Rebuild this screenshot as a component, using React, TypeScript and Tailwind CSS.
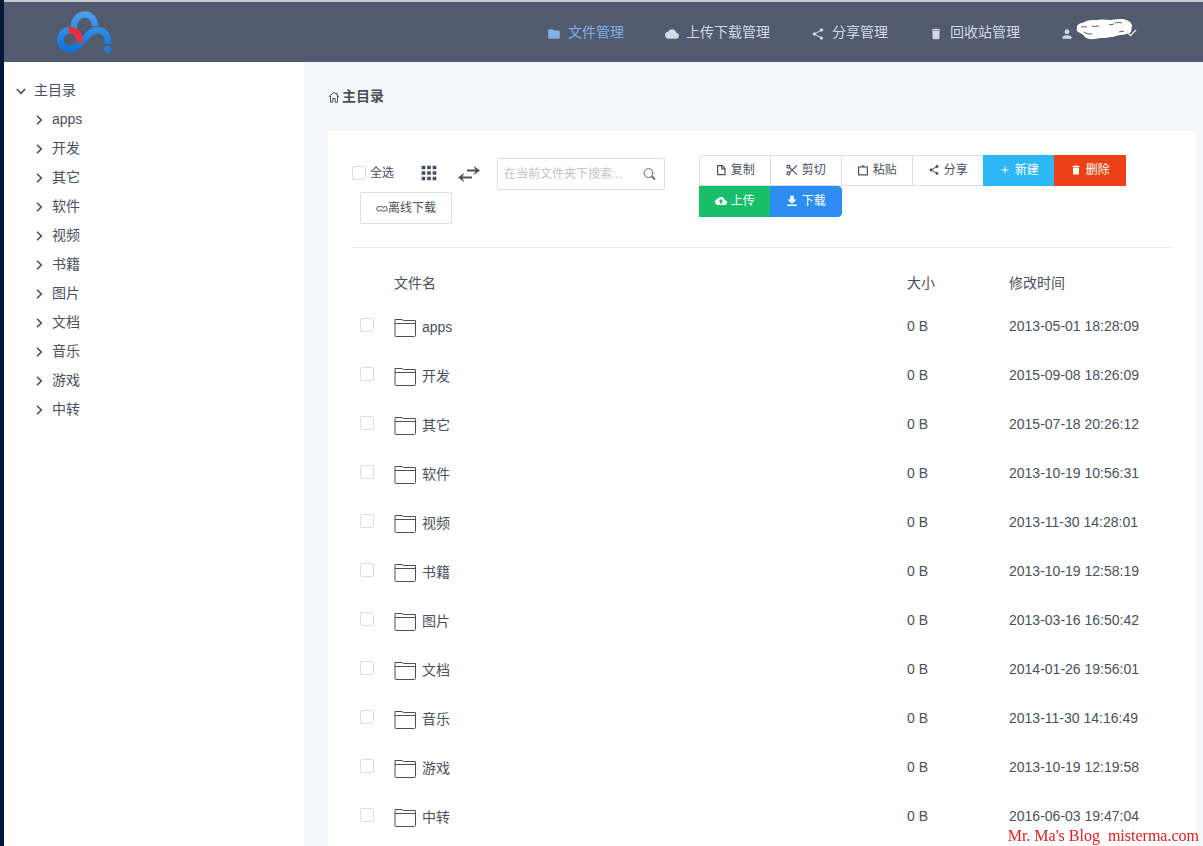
import { useState } from 'react';
import type { ReactNode } from 'react';
import clsx from 'clsx';
import {
  MdAdd,
  MdApps,
  MdCloud,
  MdCloudUpload,
  MdDelete,
  MdFolder,
  MdPerson,
  MdShare,
} from 'react-icons/md';

interface FileItem {
  name: string;
  size: string;
  mtime: string;
}

const FILES: FileItem[] = [
  { name: 'apps', size: '0 B', mtime: '2013-05-01 18:28:09' },
  { name: '开发', size: '0 B', mtime: '2015-09-08 18:26:09' },
  { name: '其它', size: '0 B', mtime: '2015-07-18 20:26:12' },
  { name: '软件', size: '0 B', mtime: '2013-10-19 10:56:31' },
  { name: '视频', size: '0 B', mtime: '2013-11-30 14:28:01' },
  { name: '书籍', size: '0 B', mtime: '2013-10-19 12:58:19' },
  { name: '图片', size: '0 B', mtime: '2013-03-16 16:50:42' },
  { name: '文档', size: '0 B', mtime: '2014-01-26 19:56:01' },
  { name: '音乐', size: '0 B', mtime: '2013-11-30 14:16:49' },
  { name: '游戏', size: '0 B', mtime: '2013-10-19 12:19:58' },
  { name: '中转', size: '0 B', mtime: '2016-06-03 19:47:04' },
];

const NAV = [
  { label: '文件管理', icon: <MdFolder className="size-3.5" /> },
  { label: '上传下载管理', icon: <MdCloud className="size-3.5" /> },
  { label: '分享管理', icon: <MdShare className="size-3.5" /> },
  { label: '回收站管理', icon: <MdDelete className="size-3.5" /> },
];

/** Cloud logo made of three linked strokes */
function Logo() {
  return (
    <svg viewBox="0 0 54 42" className="w-[54px] h-[42px]" fill="none" strokeWidth="6.600">
      <defs>
        <linearGradient id="logo-blue" x1="0" y1="0" x2="0" y2="42" gradientUnits="userSpaceOnUse">
          <stop offset="0" stopColor="#4fa2ea" />
          <stop offset="1" stopColor="#0b6fd8" />
        </linearGradient>
      </defs>
      <path d="M17 17c0-8.200 4.300-13.500 10.500-13.500S37.500 8 38.200 15" stroke="url(#logo-blue)" />
      <circle cx="12.800" cy="28.600" r="9.500" stroke="url(#logo-blue)" />
      <path
        d="M17 37.200c6-2.700 10-9.200 14-13.200 3-3.200 6-4.900 9.700-4.900 5.800 0 10 4.500 10 10.400v3.500"
        stroke="url(#logo-blue)"
      />
      <path d="M11.500 19.100c6-.6 10.800 3.700 10.800 9.500 0 1.200-.2 2-.6 3" stroke="#e8303c" />
      <circle cx="50.500" cy="37.800" r="4.500" fill="#515a6e" />
      <circle cx="50.500" cy="38.200" r="3.400" fill="#1a7fe0" />
    </svg>
  );
}

function Chevron({ down = false }: { down?: boolean }) {
  return (
    <svg
      viewBox="0 0 10 10"
      className={clsx('mt-0.5 size-2.5 shrink-0', down && 'rotate-90')}
      fill="none"
      stroke="currentColor"
      strokeWidth="1.600"
    >
      <path d="M3 .8 7.300 5 3 9.200" />
    </svg>
  );
}

function HomeIcon() {
  return (
    <svg viewBox="0 0 12 12" className="mt-0.5 size-3" fill="none" stroke="currentColor">
      <path d="M.8 6 6 1.200 11.200 6M2.500 5v6.200h2.300V7.500h2.400v3.700h2.300V5M9 3.500v-2" />
    </svg>
  );
}

function SwapIcon() {
  return (
    <svg viewBox="0 0 22 18" className="w-[22px] h-[18px]" fill="currentColor">
      <path d="M9 4.500h8.500L15.500.8 22 5.500l-6.500 4.700 2-3.700H9zM14 11.500H4.500l2-3.700L0 12.500l6.500 4.700-2-3.700H14z" />
    </svg>
  );
}

function SearchIcon() {
  return (
    <svg viewBox="0 0 14 14" className="size-3.5" fill="none" stroke="currentColor">
      <circle cx="6" cy="6" r="4.800" />
      <path d="m9.500 9.500 3.500 3.500" strokeWidth="1.800" />
    </svg>
  );
}

function LinkIcon() {
  return (
    <svg viewBox="0 0 12 12" className="size-3" fill="none" stroke="currentColor">
      <path d="M4.300 9H3a2.200 2.200 0 0 1 0-4.400h2.500c1.300 0 2 .8 2 1.900M7.700 4.600H9A2.200 2.200 0 0 1 9 9H6.500c-1.300 0-2-.8-2-1.900" />
    </svg>
  );
}

function CopyIcon() {
  return (
    <svg viewBox="0 0 12 12" className="size-3" fill="none" stroke="currentColor" strokeWidth="1.200">
      <path d="M4.500 1.600h2.700L10 4.400v6.200H2.600V3.500M6.800 1.600v3.200H10" />
      <path d="M2.600 4V1.600h2.400" />
    </svg>
  );
}

function CutIcon() {
  return (
    <svg viewBox="0 0 12 12" className="size-3" fill="none" stroke="currentColor" strokeWidth="1.200">
      <circle cx="2.400" cy="2.600" r="1.500" />
      <circle cx="2.400" cy="9.400" r="1.500" />
      <path d="m3.600 3.600 7.400 7M3.600 8.400l7.400-7" />
    </svg>
  );
}

function PasteIcon() {
  return (
    <svg viewBox="0 0 12 12" className="size-3" fill="none" stroke="currentColor" strokeWidth="1.200">
      <path d="M3.800 3H1.600v7.900h8.800V3H8.200" />
      <path d="M3.500 3.600h5V2.200H7.200L6 .8 4.800 2.200H3.500z" fill="currentColor" stroke="none" />
    </svg>
  );
}

function DownloadIcon() {
  return (
    <svg viewBox="0 0 12 12" className="size-3" fill="currentColor">
      <path d="M4.200.8h3.600v3.700h2.700L6 8.700 1.500 4.500h2.700zM1.200 9.600h9.600V11H1.200z" />
    </svg>
  );
}

function FolderIcon() {
  return (
    <svg viewBox="0 0 22 18" className="mt-0.5 w-[22px] h-[18px]" fill="none" stroke="currentColor">
      <path d="M1 16.500V.5h7l1.500 1h12v15c0 .6-.4 1-1 1H2c-.6 0-1-.4-1-1zM1 4.500h20.500" />
    </svg>
  );
}

/** Hand-brushed mark over the account name */
function UserName() {
  return (
    <svg viewBox="0 0 64 22" className="-mt-1.5 w-16 h-[22px]">
      <path
        d="M3 10C2 7 6 5 11 4c2-2 8-2 13-2 5-1 9 0 13 0 4-1 8-1 12-1 5 1 8 3 9 6 0 3-1 5-1 7-3 2-6 2-9 3-5 0-7 2-11 2-4 1-7 1-11 1-4 1-9 2-14 0-2-2-3-4-6-5-3-1-4-3-3-5z"
        fill="#fff"
      />
      <path
        d="M7 9c3-.6 5 0 6 0M18 8c3 1 4 0 7 0M35 7l5-1M41 5c2-.6 5-.6 7 0M10 14c3 2 5 2 8 2M45 14l5-1"
        fill="none"
        stroke="#515a6e"
        strokeWidth="1"
      />
      <path d="m53 14 3.500 3.500L62 12" fill="none" stroke="#e0e4ec" strokeWidth="1.400" />
    </svg>
  );
}

const CHECKBOX =
  'block size-3.5 appearance-none rounded-xs border border-[#dcdee2] bg-white checked:border-[#2d8cf0] checked:bg-[#2d8cf0]';

function ToolButton({
  icon,
  children,
  className,
}: {
  icon: ReactNode;
  children: ReactNode;
  className: string;
}) {
  return (
    <button
      type="button"
      className={clsx('-ml-px flex h-[31px] items-center gap-1 border px-[15px] pb-0.5 text-xs', className)}
    >
      {icon}
      {children}
    </button>
  );
}

function Header() {
  return (
    <header className="flex h-[62px] items-center justify-between border-t-2 border-[#c5cbce] bg-[#515a6e] pl-[53px] pr-[45px]">
      <a href="#" aria-label="主页">
        <Logo />
      </a>
      <nav className="flex">
        {NAV.map((item, i) => (
          <a
            key={item.label}
            href="#"
            className={clsx(
              'flex items-center gap-1.5 px-5',
              i === 0 ? 'text-[#7fb0e8]' : 'text-[#d3d8e4]',
            )}
          >
            <span className="flex w-4 justify-center pt-1">{item.icon}</span>
            {item.label}
          </a>
        ))}
        <button type="button" aria-label="用户" className="flex items-center px-5 text-[#d3d8e4]">
          <MdPerson className="mt-1 size-3.5" />
          <UserName />
        </button>
      </nav>
    </header>
  );
}

function Sidebar() {
  return (
    <aside className="w-[300px] shrink-0 bg-white px-3 py-[13px]">
      <a href="#" className="flex h-[29px] items-center gap-2">
        <Chevron down />
        主目录
      </a>
      <ul className="pl-[18px]">
        {FILES.map((f) => (
          <li key={f.name}>
            <a href="#" className="flex h-[29px] items-center gap-2">
              <Chevron />
              {f.name}
            </a>
          </li>
        ))}
      </ul>
    </aside>
  );
}

function Toolbar({ allSelected, onSelectAll }: { allSelected: boolean; onSelectAll: () => void }) {
  const plain = 'border-[#dcdee2] bg-white';

  return (
    <div className="grid grid-cols-12 border-b border-[#e8eaec] pb-[23px] text-xs">
      <div className="col-span-5 pt-[3px]">
        <div className="flex items-center">
          <label className="flex items-center gap-1 pb-0.5">
            <input type="checkbox" className={CHECKBOX} checked={allSelected} onChange={onSelectAll} />
            全选
          </label>
          <button type="button" aria-label="网格视图" className="ml-6 pb-0.5">
            <MdApps className="size-[22px]" />
          </button>
          <button type="button" aria-label="切换排序" className="ml-[18px]">
            <SwapIcon />
          </button>
          <label className="ml-[17px] flex h-8 w-[168px] items-center rounded-xs border border-[#dcdee2] pl-1.5 pr-2">
            <input
              type="text"
              aria-label="搜索"
              placeholder="在当前文件夹下搜索..."
              className="w-full min-w-0 outline-none placeholder:text-[#c0c4cc]"
            />
            <SearchIcon />
          </label>
        </div>
        <button
          type="button"
          className="ml-2 mt-0.5 flex h-8 items-center rounded-xs border border-[#dcdee2] px-[15px]"
        >
          <LinkIcon />
          离线下载
        </button>
      </div>

      <div className="col-span-7 flex flex-wrap content-start pl-1.5">
        <ToolButton icon={<CopyIcon />} className={clsx(plain, 'rounded-tl-sm')}>复制</ToolButton>
        <ToolButton icon={<CutIcon />} className={plain}>剪切</ToolButton>
        <ToolButton icon={<PasteIcon />} className={plain}>粘贴</ToolButton>
        <ToolButton icon={<MdShare className="size-3" />} className={plain}>分享</ToolButton>
        <ToolButton icon={<MdAdd className="size-3" />} className="border-[#2db7f5] bg-[#2db7f5] text-white">
          新建
        </ToolButton>
        <ToolButton icon={<MdDelete className="size-3" />} className="border-[#ed4014] bg-[#ed4014] text-white">
          删除
        </ToolButton>
        <ToolButton icon={<MdCloudUpload className="size-3" />} className="border-[#19be6b] bg-[#19be6b] text-white">
          上传
        </ToolButton>
        <ToolButton icon={<DownloadIcon />} className="rounded-r-sm border-[#2d8cf0] bg-[#2d8cf0] text-white">
          下载
        </ToolButton>
      </div>
    </div>
  );
}

export default function App() {
  const [selected, setSelected] = useState<string[]>([]);

  const toggle = (name: string) =>
    setSelected((s) => (s.includes(name) ? s.filter((n) => n !== name) : [...s, name]));

  const allSelected = selected.length === FILES.length;

  return (
    <div className="flex min-h-screen flex-col border-l-4 border-[#06183a] bg-[#f5f7f9] font-['Liberation_Sans','Noto_Sans_CJK_SC',sans-serif] text-sm text-[#495060]">
      <Header />
      <div className="flex flex-1">
        <Sidebar />
        <main className="flex flex-1 flex-col pl-6 pr-[7px]">
          <h1 className="flex h-[69px] items-center gap-0.5 pb-0.5 font-bold">
            <HomeIcon />
            主目录
          </h1>
          <section className="flex-1 bg-white px-6 pt-6">
            <Toolbar
              allSelected={allSelected}
              onSelectAll={() => setSelected(allSelected ? [] : FILES.map((f) => f.name))}
            />
            <table className="mt-4 w-full table-fixed text-left">
              <thead>
                <tr className="h-[38px]">
                  <th className="w-[42px]" />
                  <th className="font-normal">文件名</th>
                  <th className="w-[102px] font-normal">大小</th>
                  <th className="w-[163px] font-normal">修改时间</th>
                </tr>
              </thead>
              <tbody>
                {FILES.map((f) => (
                  <tr key={f.name} className="h-[49px]">
                    <td className="pb-1 pl-2">
                      <input
                        type="checkbox"
                        aria-label={f.name}
                        className={CHECKBOX}
                        checked={selected.includes(f.name)}
                        onChange={() => toggle(f.name)}
                      />
                    </td>
                    <td>
                      <a href="#" className="flex items-center gap-1.5">
                        <FolderIcon />
                        {f.name}
                      </a>
                    </td>
                    <td className="pb-0.5">{f.size}</td>
                    <td className="pb-0.5">{f.mtime}</td>
                  </tr>
                ))}
              </tbody>
            </table>
          </section>
        </main>
      </div>
      <p className="fixed bottom-0 right-1 whitespace-pre font-['Liberation_Serif',serif] text-base/5 text-[#e02020]">
        Mr. Ma's Blog  misterma.com
      </p>
    </div>
  );
}
